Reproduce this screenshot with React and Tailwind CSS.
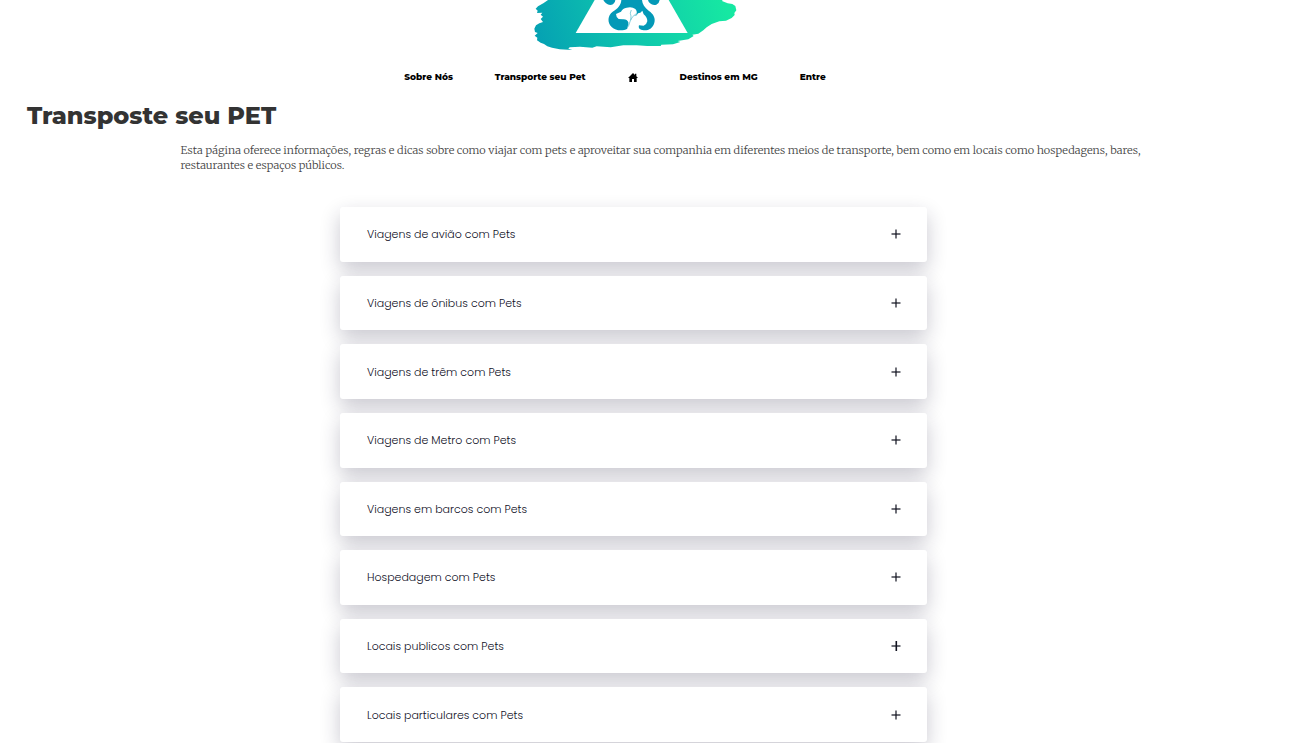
import React, { useState } from "react";

const topics = [
  { title: "Viagens de avião com Pets" },
  { title: "Viagens de ônibus com Pets" },
  { title: "Viagens de trêm com Pets" },
  { title: "Viagens de Metro com Pets" },
  { title: "Viagens em barcos com Pets" },
  { title: "Hospedagem com Pets" },
  { title: "Locais publicos com Pets", strong: true },
  { title: "Locais particulares com Pets" },
];

function Logo() {
  return (
    <svg viewBox="0 0 690 180" className="h-[60px] w-[230px]" role="img" aria-label="Logo">
      <defs>
        <linearGradient id="brush" gradientUnits="userSpaceOnUse" x1="60" y1="130" x2="600" y2="-40">
          <stop offset="0" stopColor="#05a2b3" />
          <stop offset="0.5" stopColor="#0fc7ad" />
          <stop offset="1" stopColor="#16e8a2" />
        </linearGradient>
      </defs>
      <path
        fill="url(#brush)"
        d="M84 0 L70 10 L54 19 L47 26 L53 32 L51 39 L67 38 L62 44 L69 50 L62 57 L69 66 L58 70 L48 76 L43 86 L45 96 L53 99 L44 107 L52 113 L51 121 L62 128 L72 132 L82 139 L96 143 L119 148 L157 150 L145 146 L149 142 L180 140 L217 143 L230 139 L272 142 L310 136 L350 136 L382 138 L422 138 L424 134 L459 133 L481 126 L473 123 L505 118 L521 108 L517 104 L535 101 L550 91 L560 82 L575 72 L598 64 L618 62 L635 54 L644 45 L643 39 L649 31 L646 18 L637 12 L623 10 L606 3 L608 0 Z"
      />
      <path fill="#fff" d="M224 0 H446 L503 99 H167 Z" />
      <path
        fill="#0399b7"
        d="M250 0 H286 Q286 8 279 13 Q268 18 258 10 Q253 6 250 0 Z M384 0 H419 Q418 9 409 14 Q399 18 390 10 Q385 6 384 0 Z"
      />
      <path
        fill="#0399b7"
        d="M304 0 H366 C367 13 374 23 386 32 C401 42 407 55 403 68 C399 83 387 92 371 91 C360 90 354 85 356 76 H324 L322 86 C310 93 288 94 275 81 C261 67 263 46 278 35 C294 26 303 15 304 0 Z"
      />
      <path
        fill="#fff"
        d="M288 42 L303 35 Q308 24 320 23 Q336 19 346 27 Q353 35 349 44 L341 49 L350 46 L354 40 L361 38 L367 32 L371 43 Q382 52 382 64 Q380 74 371 77 L357 76 Q352 84 360 91 H322 Q327 80 325 67 Q321 57 309 58 L296 57 Q288 51 288 42 Z"
      />
      <path fill="none" stroke="#48b7cb" strokeWidth="2" d="M334 30 Q328 40 333 48 L332 61 M350 40 L338 50 L331 62 L325 80" />
    </svg>
  );
}

function PlusIcon({ strong }) {
  return (
    <svg viewBox="0 0 10 10" className="size-[10px] shrink-0" aria-hidden="true">
      <path d="M.5 5H9.5" fill="none" stroke="#10121f" strokeWidth="1.2" />
      <path d={strong ? "M5.3 0V10" : "M5 .5V9.5"} fill="none" stroke="#10121f" strokeWidth={strong ? "1.6" : "1.2"} />
    </svg>
  );
}

function Topic({ title, strong }) {
  const [open, setOpen] = useState(false);
  return (
    <li className="flex flex-col rounded-[3px] bg-white shadow-[0_8px_20px_rgba(30,25,60,0.24)]">
      <button
        type="button"
        aria-expanded={open}
        onClick={() => setOpen(!open)}
        className="flex grow cursor-pointer items-center justify-between py-[17px] pr-[26px] pl-[27px] text-left"
      >
        <span>{title}</span>
        <PlusIcon strong={strong} />
      </button>
    </li>
  );
}

export default function App() {
  return (
    <div className="min-h-screen overflow-x-hidden bg-white pb-px">
      <header>
        <div className="flex justify-center pr-[37px]">
          <Logo />
        </div>
        <nav
          aria-label="Principal"
          className="flex h-8 items-center justify-center gap-[42px] pt-0.5 pr-[77px] font-['Montserrat',sans-serif] text-[9px] leading-4 font-extrabold text-black"
        >
          <a href="#sobre">Sobre Nós</a>
          <a href="#transporte">Transporte seu Pet</a>
          <a href="#inicio" aria-label="Início">
            <svg viewBox="0 0 30 27" className="block h-[9px] w-[10px]" fill="currentColor" aria-hidden="true">
              <path d="M15 0 L21 6 V2 H25 V10 L30 15 H26 V27 H18 V18 H12 V27 H4 V15 H0 Z" />
            </svg>
          </a>
          <a href="#destinos">Destinos em MG</a>
          <a href="#entre">Entre</a>
        </nav>
      </header>
      <main>
        <h1 className="px-[27px] pt-2 font-['Montserrat',sans-serif] text-[24px] leading-8 font-extrabold text-[#333]">
          Transposte seu PET
        </h1>
        <p className="mx-auto mt-[11px] box-content max-w-[980px] pl-[34px] font-['Merriweather',serif] text-[11px] leading-[15px] font-light text-[#444]">
          Esta página oferece informações, regras e dicas sobre como viajar com pets e aproveitar sua companhia em
          diferentes meios de transporte, bem como em locais como hospedagens, bares, restaurantes e espaços públicos.
        </p>
        <div className="pt-[34px] pr-10">
          <ul className="mx-auto grid min-h-[535px] max-w-[587px] auto-rows-fr gap-[14px] font-['Poppins',sans-serif] text-[11px] leading-4 font-light text-[#10101f]">
            {topics.map((topic) => (
              <Topic key={topic.title} {...topic} />
            ))}
          </ul>
        </div>
      </main>
    </div>
  );
}
